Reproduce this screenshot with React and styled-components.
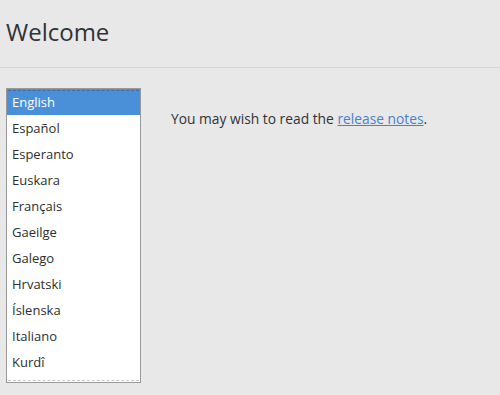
import styled, { createGlobalStyle } from "styled-components";

const Global = createGlobalStyle`
    html, body {
        margin: 0;
        padding: 0;
        background: #e8e8e8;
        font-family: "Open Sans", "DejaVu Sans", sans-serif;
        color: #2e3436;
    }
`

const Page = styled.div`
    width: 500px;
    height: 395px;
    display: flex;
    flex-direction: column;
    overflow: hidden;
`

const Header = styled.div`
    height: 68px;
    box-sizing: border-box;
    border-bottom: 1px solid #d3d3d3;
    padding: 15px 0 0 6px;
`

const Title = styled.h1`
    margin: 0;
    font-size: 24px;
    font-weight: 400;
    color: #2e3436;
`

const Body = styled.div`
    display: flex;
    padding: 20px 0 0 6px;
    gap: 30px;
`

const List = styled.div`
    width: 135px;
    height: 295px;
    box-sizing: border-box;
    border: 1px solid #999;
    background: #fff;
    position: relative;
`

const Dash = styled.div`
    position: absolute;
    left: 1px;
    right: 1px;
    height: 0;
    border-top: 1px dashed ${p => p.$dark ? "#3b6fb0" : "#c8c8c8"};
    ${p => p.$bottom ? "bottom: 1px;" : "top: 1px;"}
`

const Item = styled.div`
    height: 26px;
    line-height: 26px;
    padding-left: 5px;
    font-size: 13px;
    background: ${p => p.$selected ? "#4a90d9" : "transparent"};
    color: ${p => p.$selected ? "#fff" : "#2e2e2e"};
`

const Note = styled.p`
    margin: 21px 0 0 0;
    font-size: 13.8px;
    color: #2e3436;
`

const Link = styled.a`
    color: #4a7fcf;
    text-decoration: underline;
`

const languages = ["English", "Español", "Esperanto", "Euskara", "Français", "Gaeilge", "Galego", "Hrvatski", "Íslenska", "Italiano", "Kurdî"];

export default function App(){
    return(
        <Page>
            <Global/>
            <Header>
                <Title>Welcome</Title>
            </Header>
            <Body>
                <List>
                    {languages.map((l, i) => (
                        <Item key={l} $selected={i === 0}>{l}</Item>
                    ))}
                    <Dash $dark/>
                    <Dash $bottom/>
                </List>
                <Note>You may wish to read the <Link href="#">release notes</Link>.</Note>
            </Body>
        </Page>
    )
}
